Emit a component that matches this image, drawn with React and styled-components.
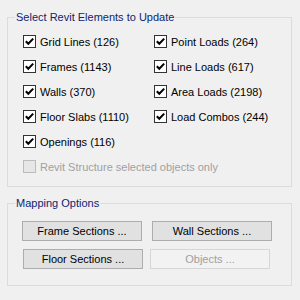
import React from "react";
import styled, { createGlobalStyle } from "styled-components";

const GlobalStyle = createGlobalStyle`
  html, body {
    margin: 0;
    padding: 0;
    background: #f0f0f0;
  }
  body {
    font-family: "Liberation Sans", Arial, sans-serif;
    font-size: 11px;
    color: #000;
  }
`;

const Page = styled.div`
  width: 300px;
  height: 300px;
  box-sizing: border-box;
  padding: 11px 0 0 7px;
  background: #f0f0f0;
`;

const Group = styled.fieldset`
  width: 285px;
  box-sizing: border-box;
  margin: ${(p) => p.$top || 0}px 0 0 0;
  padding: ${(p) => p.$pad};
  border: 1px solid #dcdcdc;
  border-radius: 0;
  min-width: 0;
`;

const Legend = styled.legend`
  margin-left: 7px;
  padding: 0 1px;
  font-size: 11px;
  line-height: 13px;
  color: #0f2470;
`;

const CheckGrid = styled.div`
  display: grid;
  grid-template-columns: 131px 1fr;
  row-gap: 12px;
  padding-left: 15px;
`;

const CheckItem = styled.label`
  display: flex;
  align-items: center;
  gap: 4px;
  height: 13px;
  line-height: 12px;
  color: ${(p) => (p.$disabled ? "#a0a0a0" : "#000")};
  grid-column: ${(p) => (p.$wide ? "1 / -1" : "auto")};
  white-space: nowrap;
`;

const Box = styled.span`
  width: 13px;
  height: 13px;
  box-sizing: border-box;
  border: 1px solid ${(p) => (p.$disabled ? "#bcbcbc" : "#333333")};
  background: ${(p) => (p.$disabled ? "#e6e6e6" : "#ffffff")};
  display: flex;
  align-items: center;
  justify-content: center;
  flex: none;
`;

const ButtonRow = styled.div`
  display: flex;
  gap: ${(p) => p.$gap}px;
  padding-left: ${(p) => p.$indent}px;
  & + & {
    margin-top: 8px;
  }
`;

const Button = styled.button`
  width: 120px;
  height: 20px;
  box-sizing: border-box;
  padding: 0;
  margin: 0;
  border: 1px solid ${(p) => (p.disabled ? "#d6d6d6" : "#adadad")};
  background: ${(p) => (p.disabled ? "#f2f2f2" : "#e1e1e1")};
  color: ${(p) => (p.disabled ? "#a0a0a0" : "#000")};
  font-family: "Liberation Sans", Arial, sans-serif;
  font-size: 11px;
  line-height: 18px;
  border-radius: 0;
`;

function Check({ label, checked = true, disabled, wide }) {
  return (
    <CheckItem $disabled={disabled} $wide={wide}>
      <Box $disabled={disabled}>
        {checked && (
          <svg width="11" height="11" viewBox="0 0 11 11">
            <polyline
              points="1.8,5.2 4.3,7.8 9.2,2.6"
              fill="none"
              stroke="#000"
              strokeWidth="2"
            />
          </svg>
        )}
      </Box>
      <span>{label}</span>
    </CheckItem>
  );
}

export default function App() {
  return (
    <>
      <GlobalStyle />
      <Page>
        <Group $pad="11px 0 13px 0">
          <Legend>Select Revit Elements to Update</Legend>
          <CheckGrid>
            <Check label="Grid Lines (126)" />
            <Check label="Point Loads (264)" />
            <Check label="Frames (1143)" />
            <Check label="Line Loads (617)" />
            <Check label="Walls (370)" />
            <Check label="Area Loads (2198)" />
            <Check label="Floor Slabs (1110)" />
            <Check label="Load Combos (244)" />
            <Check label="Openings (116)" wide />
            <Check
              label="Revit Structure selected objects only"
              checked={false}
              disabled
              wide
            />
          </CheckGrid>
        </Group>
        <Group $top={10} $pad="11px 0 16px 0">
          <Legend>Mapping Options</Legend>
          <ButtonRow $indent={14} $gap={10}>
            <Button>Frame Sections ...</Button>
            <Button>Wall Sections ...</Button>
          </ButtonRow>
          <ButtonRow $indent={15} $gap={7}>
            <Button>Floor Sections ...</Button>
            <Button disabled>Objects ...</Button>
          </ButtonRow>
        </Group>
      </Page>
    </>
  );
}
